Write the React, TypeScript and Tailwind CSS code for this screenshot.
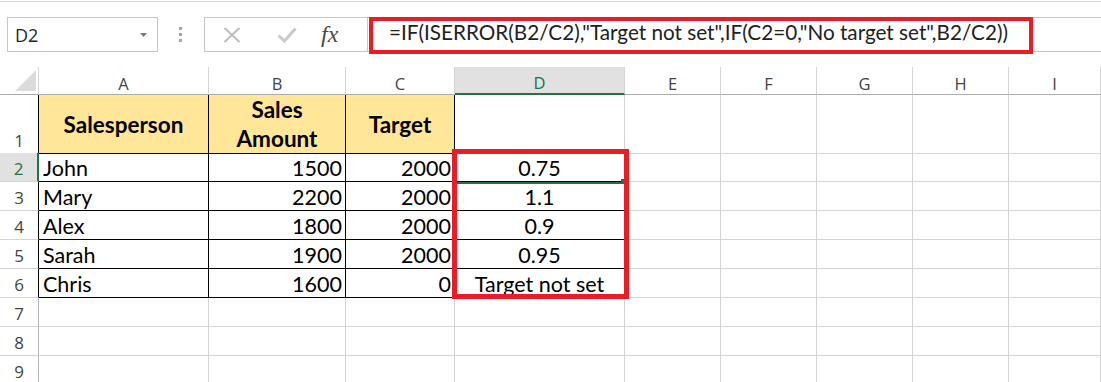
import React from "react"

// column widths: row header, A..I
const gridCols =
  "grid grid-cols-[39px_170px_137px_109px_170px_96px_96px_96px_96px_1fr]"

const letters = ["A", "B", "C", "D", "E", "F", "G", "H", "I"]

type Row = { name: string; sales: string; target: string; ratio: string }

const rows: Row[] = [
  { name: "John", sales: "1500", target: "2000", ratio: "0.75" },
  { name: "Mary", sales: "2200", target: "2000", ratio: "1.1" },
  { name: "Alex", sales: "1800", target: "2000", ratio: "0.9" },
  { name: "Sarah", sales: "1900", target: "2000", ratio: "0.95" },
  { name: "Chris", sales: "1600", target: "0", ratio: "Target not set" },
]

const cellFont = "font-['Lato',sans-serif] text-[21.5px] leading-[24px] text-black"
const boldFont = "font-['Lato',sans-serif] font-bold text-[22.5px] leading-[29px] text-black"
const headFont = "font-['Open_Sans',sans-serif] text-[#444]"

function RowHead({ n, selected, inTable }: { n: number; selected?: boolean; inTable?: boolean }) {
  return (
    <div
      className={
        "flex items-end justify-center pb-[2px] border-b border-[#d4d4d4] text-[17px] leading-[20px] " +
        headFont +
        (selected
          ? " bg-[#e1e1e1] !text-[#217346] border-r-2 border-r-[#217346]"
          : inTable
          ? " border-r border-r-black"
          : " border-r border-r-[#b4b4b4]")
      }
    >
      {n}
    </div>
  )
}

function Blank({ dark }: { dark?: boolean }) {
  return (
    <div
      className={
        "border-r border-b " +
        (dark ? "border-r-[#d4d4d4] border-b-black" : "border-[#d4d4d4]")
      }
    />
  )
}

export default function App() {
  return (
    <div className="w-full h-[382px] overflow-hidden bg-white">
      {/* ── toolbar: name box + formula bar ── */}
      <div className="h-[67px] pt-[1px]">
        <div className="h-[66px] border-t border-[#d4d4d4] pt-[15px] flex items-start">
          {/* name box */}
          <div className="ml-[7px] w-[151px] h-[35px] border border-[#c6c6c6] flex items-center pl-[7px] pr-[10px]">
            <span className="font-['Open_Sans',sans-serif] text-[18px] text-[#262626] leading-[22px]">
              D2
            </span>
            <svg className="ml-auto" width="7" height="4" viewBox="0 0 7 4">
              <path d="M0 0h7L3.5 4z" fill="#7a7a7a" />
            </svg>
          </div>

          {/* grip dots */}
          <div className="ml-[21px] mt-[10px] flex flex-col gap-[3px]">
            <div className="w-[3px] h-[3px] bg-[#a6a6a6]" />
            <div className="w-[3px] h-[3px] bg-[#a6a6a6]" />
            <div className="w-[3px] h-[3px] bg-[#a6a6a6]" />
          </div>

          {/* cancel / enter / fx */}
          <div className="ml-[22px] w-[164px] h-[35px] border border-[#c6c6c6] flex items-center">
            <svg className="ml-[18px]" width="18" height="16" viewBox="0 0 18 16">
              <path d="M1.5 1 16.5 15M16.5 1 1.5 15" stroke="#bdbdbd" strokeWidth="2" fill="none" />
            </svg>
            <svg className="ml-[36px]" width="20" height="16" viewBox="0 0 20 16">
              <path d="M1.5 8.5 7.5 14 18.5 1.5" stroke="#c9c9c9" strokeWidth="3" fill="none" />
            </svg>
            <span className="ml-[24px] font-['Liberation_Serif',serif] italic text-[24px] leading-[24px] text-[#4a4a4a] -mt-[2px]">
              fx
            </span>
          </div>

          {/* formula bar */}
          <div className="relative flex-1 h-[35px] border-y border-[#c6c6c6] flex items-start pt-[2px] pl-[21px]">
            <span className="font-['Lato',sans-serif] text-[20.7px] leading-[24px] text-[#222] whitespace-nowrap">
              =IF(ISERROR(B2/C2),"Target not set",IF(C2=0,"No target set",B2/C2))
            </span>
            <div className="absolute left-[1px] -top-[1px] w-[664px] h-[37px] border-4 border-[#ec1c24]" />
          </div>
        </div>
      </div>

      {/* ── sheet ── */}
      <div className="relative">
        {/* column headers */}
        <div className={gridCols + " h-[28px]"}>
          <div className="flex items-end justify-end pr-[2px] pb-[3px] border-r border-r-[#d4d4d4] border-b border-b-[#ababab]">
            <svg width="21" height="21" viewBox="0 0 21 21">
              <path d="M21 0V21H0z" fill="#dcdcdc" />
            </svg>
          </div>
          {letters.map((l) => (
            <div
              key={l}
              className={
                "flex items-end justify-center text-[16.5px] leading-[21px] border-r border-r-[#d4d4d4] " +
                headFont +
                (l === "D"
                  ? " bg-[#e1e1e1] !text-[#217346] border-b-2 border-b-[#217346]"
                  : " border-b border-b-[#ababab]")
              }
            >
              {l}
            </div>
          ))}
        </div>

        {/* row 1 — table header */}
        <div className={gridCols + " h-[58px]"}>
          <RowHead n={1} inTable />
          <div className={"flex items-center justify-center bg-[#ffe699] border-r border-b border-black " + boldFont}>
            Salesperson
          </div>
          <div className={"flex items-center justify-center text-center bg-[#ffe699] border-r border-b border-black " + boldFont}>
            Sales
            <br />
            Amount
          </div>
          <div className={"flex items-center justify-center bg-[#ffe699] border-r border-b border-black " + boldFont}>
            Target
          </div>
          <Blank dark />
          <Blank />
          <Blank />
          <Blank />
          <Blank />
          <Blank />
        </div>

        {/* rows 2-6 — data */}
        {rows.map((r, i) => (
          <div key={r.name} className={gridCols + " h-[29px]"}>
            <RowHead n={i + 2} selected={i === 0} inTable />
            <div className={"flex items-end pb-[1px] pl-[4px] border-r border-b border-black " + cellFont}>
              {r.name}
            </div>
            <div className={"flex items-end justify-end pb-[1px] pr-[3px] border-r border-b border-black " + cellFont}>
              {r.sales}
            </div>
            <div className={"flex items-end justify-end pb-[1px] pr-[3px] border-r border-b border-black " + cellFont}>
              {r.target}
            </div>
            <div className={"flex items-end justify-center pb-[1px] border-r border-b border-black " + cellFont}>
              {r.ratio}
            </div>
            <Blank />
            <Blank />
            <Blank />
            <Blank />
            <Blank />
          </div>
        ))}

        {/* rows 7-9 — empty */}
        {[7, 8, 9].map((n) => (
          <div key={n} className={gridCols + " h-[29px]"}>
            <RowHead n={n} />
            {letters.map((l) => (
              <Blank key={l} />
            ))}
          </div>
        ))}

        {/* active cell D2 — only the bottom edge and fill handle show */}
        <div className="absolute left-[455px] top-[115px] w-[168px] h-[2px] bg-[#217346]" />
        <div className="absolute left-[621px] top-[112px] w-[4px] h-[5px] bg-[#217346]" />

        {/* red highlight round D2:D6 */}
        <div className="absolute left-[452px] top-[82px] w-[177px] h-[150px] border-[5px] border-[#ec1c24]" />
      </div>
    </div>
  )
}
